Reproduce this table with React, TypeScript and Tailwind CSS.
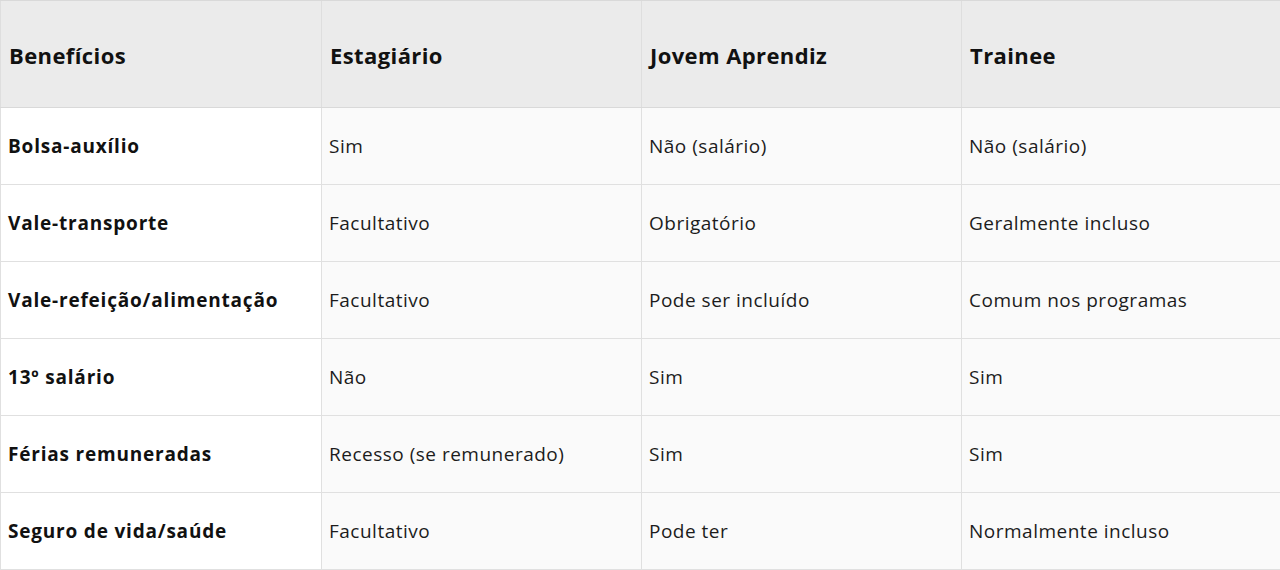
import React from "react";

const header = ["Benefícios", "Estagiário", "Jovem Aprendiz", "Trainee"];
const rows: string[][] = [
  ["Bolsa-auxílio", "Sim", "Não (salário)", "Não (salário)"],
  ["Vale-transporte", "Facultativo", "Obrigatório", "Geralmente incluso"],
  ["Vale-refeição/alimentação", "Facultativo", "Pode ser incluído", "Comum nos programas"],
  ["13º salário", "Não", "Sim", "Sim"],
  ["Férias remuneradas", "Recesso (se remunerado)", "Sim", "Sim"],
  ["Seguro de vida/saúde", "Facultativo", "Pode ter", "Normalmente incluso"],
];

const widths = ["w-[321px]", "w-[320px]", "w-[320px]", "w-[319px]"];

export default function App() {
  return (
    <div
      className="w-[1280px] h-[570px] overflow-hidden bg-white"
      style={{ fontFamily: '"Open Sans", "Noto Sans", sans-serif' }}
    >
      <div className="flex h-[108px] bg-[#ebebeb] border-t border-b border-[#d9d9d9]">
        {header.map((h, i) => (
          <div
            key={i}
            className={`${widths[i]} shrink-0 flex items-center pl-[8px] pt-[3px] border-l border-[#dedede] text-[22px] font-bold text-[#111] tracking-[0.4px]`}
          >
            {h}
          </div>
        ))}
      </div>
      {rows.map((r, ri) => (
        <div key={ri} className="flex h-[77px] border-b border-[#e0e0e0]">
          {r.map((c, ci) => (
            <div
              key={ci}
              className={`${widths[ci]} shrink-0 flex items-center pl-[7px] pt-[1px] border-l border-[#e0e0e0] text-[19px] ${
                ci === 0
                  ? "bg-white font-bold text-[#111] tracking-[0.8px]"
                  : "bg-[#fafafa] text-[#1c1c1c] tracking-[0.5px]"
              }`}
            >
              {c}
            </div>
          ))}
        </div>
      ))}
    </div>
  );
}
